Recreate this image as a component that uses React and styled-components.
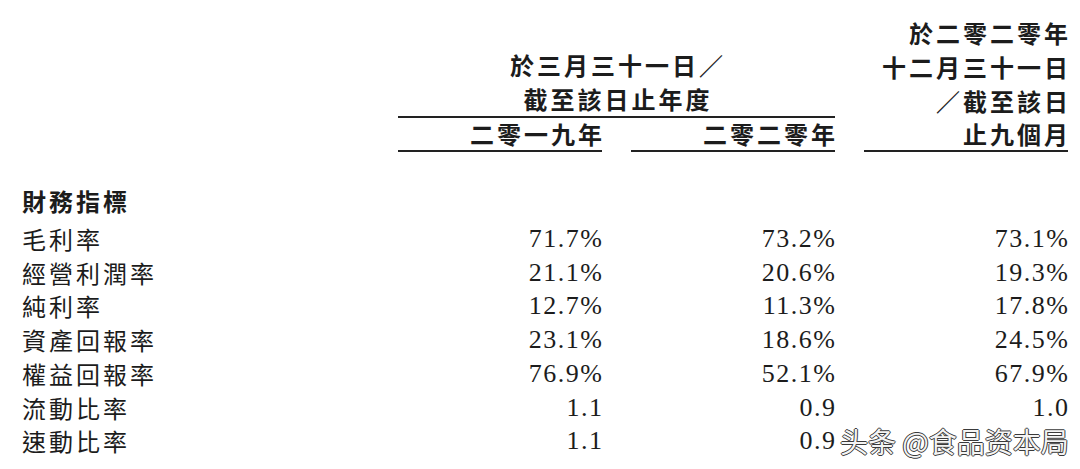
import styled, { createGlobalStyle } from "styled-components";

const GlobalStyle = createGlobalStyle`
  html, body {
    margin: 0;
    padding: 0;
    background: #ffffff;
  }
  body {
    font-family: "Liberation Serif", "Noto Sans CJK TC", serif;
    color: #1c1c1c;
  }
`;

const rows = [
  { label: "毛利率", values: ["71.7%", "73.2%", "73.1%"] },
  { label: "經營利潤率", values: ["21.1%", "20.6%", "19.3%"] },
  { label: "純利率", values: ["12.7%", "11.3%", "17.8%"] },
  { label: "資產回報率", values: ["23.1%", "18.6%", "24.5%"] },
  { label: "權益回報率", values: ["76.9%", "52.1%", "67.9%"] },
  { label: "流動比率", values: ["1.1", "0.9", "1.0"] },
  { label: "速動比率", values: ["1.1", "0.9", "1.0"] },
];

export default function App() {
  return (
    <Page>
      <GlobalStyle />
      <Table>
        <GroupHead>
          <Tracked>於三月三十一日／</Tracked>
          <Tracked>截至該日止年度</Tracked>
        </GroupHead>
        <PeriodHead>
          <Tracked>於二零二零年</Tracked>
          <Tracked>十二月三十一日</Tracked>
          <Tracked>／截至該日</Tracked>
        </PeriodHead>
        <SubHead $col={2}>
          <Tracked>二零一九年</Tracked>
        </SubHead>
        <SubHead $col={3}>
          <Tracked>二零二零年</Tracked>
        </SubHead>
        <SubHead $col={4}>
          <Tracked>止九個月</Tracked>
        </SubHead>

        <SectionTitle>
          <Tracked>財務指標</Tracked>
        </SectionTitle>

        {rows.map((row) => (
          <Row key={row.label}>
            <Label>
              <Tracked>{row.label}</Tracked>
            </Label>
            {row.values.map((v, i) => (
              <Value key={i}>{v}</Value>
            ))}
          </Row>
        ))}
      </Table>
      <Watermark>头条 @食品资本局</Watermark>
    </Page>
  );
}

const Page = styled.div({
  position: "relative",
  width: 1080,
  height: 469,
  overflow: "hidden",
  background: "#fff",
});

const Table = styled.div({
  display: "grid",
  gridTemplateColumns: "347px 204px 204px 204px",
  columnGap: 29,
  padding: "16px 0 0 22px",
});

const Tracked = styled.span({
  display: "block",
  letterSpacing: 3,
  marginRight: -3,
});

const HeadCell = styled.div({
  fontFamily: '"Noto Sans CJK TC", sans-serif',
  fontWeight: 700,
  fontSize: 24,
  lineHeight: "34px",
});

const GroupHead = styled(HeadCell)({
  gridColumn: "2 / 4",
  gridRow: 1,
  alignSelf: "end",
  textAlign: "center",
  borderBottom: "2px solid #222",
});

const PeriodHead = styled(HeadCell)({
  gridColumn: 4,
  gridRow: 1,
  textAlign: "right",
});

const SubHead = styled(HeadCell)`
  grid-column: ${(p) => p.$col};
  grid-row: 2;
  text-align: right;
  line-height: 32px;
  border-bottom: 2px solid #222;
`;

const SectionTitle = styled(HeadCell)({
  gridColumn: "1 / -1",
  marginTop: 32,
  marginBottom: 4,
});

const Row = styled.div({
  display: "contents",
});

const Label = styled.div({
  fontFamily: '"Noto Sans CJK TC", sans-serif',
  fontSize: 24,
  lineHeight: "33.7px",
});

const Value = styled.div({
  fontFamily: '"Liberation Serif", serif',
  fontSize: 26,
  lineHeight: "33.7px",
  letterSpacing: 1.5,
  marginRight: -1.5,
  textAlign: "right",
});

const Watermark = styled.div({
  position: "absolute",
  left: 838,
  top: 424,
  padding: "0 2px 0 2px",
  background: "#fff",
  fontFamily: '"Noto Sans CJK SC", sans-serif',
  fontSize: 28,
  lineHeight: "34px",
  color: "#f4f4f4",
  textShadow:
    "1px 0 0 #3a3a3a, -1px 0 0 #3a3a3a, 0 1px 0 #3a3a3a, 0 -1px 0 #3a3a3a",
});
